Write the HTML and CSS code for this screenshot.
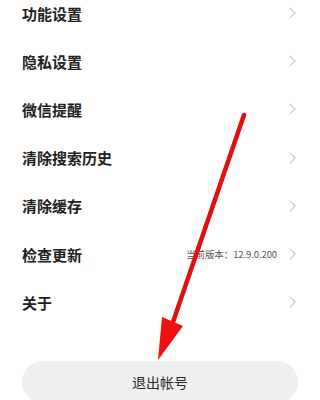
FILE: index.html
```html
<!DOCTYPE html>
<html lang="zh">
<head>
<meta charset="utf-8">
<link rel="stylesheet" href="styles.css">
</head>
<body>
<div class="page">
  <ul class="list">
    <li class="row"><span class="label">功能设置</span><span class="chev"></span></li>
    <li class="row"><span class="label">隐私设置</span><span class="chev"></span></li>
    <li class="row"><span class="label">微信提醒</span><span class="chev"></span></li>
    <li class="row"><span class="label">清除搜索历史</span><span class="chev"></span></li>
    <li class="row"><span class="label">清除缓存</span><span class="chev"></span></li>
    <li class="row"><span class="label">检查更新</span><span class="right"><span class="ver">当前版本：12.9.0.200</span><span class="chev"></span></span></li>
    <li class="row"><span class="label">关于</span><span class="chev"></span></li>
  </ul>
  <div class="btn">退出帐号</div>
  <svg class="arrow" width="320" height="400" viewBox="0 0 320 400">
    <line x1="244" y1="115" x2="173" y2="322" stroke="#e01010" stroke-width="4.5" stroke-linecap="round"/>
    <polygon points="158,360 162,317 183,326" fill="#f01010"/>
  </svg>
</div>
</body>
</html>
```
FILE: styles.css
```css
html, body { margin: 0; padding: 0; background: #fff; }
body { font-family: "Noto Sans CJK SC", "Noto Sans", sans-serif; }
.page { position: relative; width: 320px; height: 400px; overflow: hidden; }
.list { list-style: none; margin: -11px 0 0 0; padding: 0; }
.row { height: 48.2px; display: flex; align-items: center; justify-content: space-between; padding: 0 22px 0 22px; }
.label { font-size: 15px; color: #222; font-weight: 700; }
.right { display: flex; align-items: center; gap: 9px; }
.ver { font-size: 9.5px; color: #555; letter-spacing: -0.1px; }
.chev { width: 7px; height: 7px; border-right: 1.3px solid #c4c4c4; border-top: 1.3px solid #c4c4c4; transform: rotate(45deg); margin-right: 4px; }
.btn { margin: 35px 22px 0 22px; height: 42px; border-radius: 21px; background: #efefef; display: flex; align-items: center; justify-content: center; font-size: 14px; color: #2a2a2a; }
.arrow { position: absolute; left: 0; top: 0; }
```
